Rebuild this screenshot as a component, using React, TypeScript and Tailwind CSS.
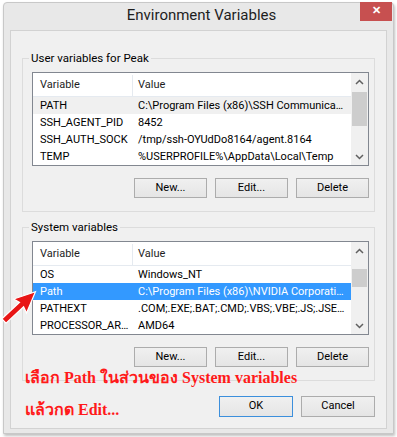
import React from "react";

type Row = [string, string];

const userRows: Row[] = [
  ["PATH", "C:\\Program Files (x86)\\SSH Communications Security\\SSH Secure Shell"],
  ["SSH_AGENT_PID", "8452"],
  ["SSH_AUTH_SOCK", "/tmp/ssh-OYUdDo8164/agent.8164"],
  ["TEMP", "%USERPROFILE%\\AppData\\Local\\Temp"],
];

const systemRows: Row[] = [
  ["OS", "Windows_NT"],
  ["Path", "C:\\Program Files (x86)\\NVIDIA Corporation\\PhysX\\Common"],
  ["PATHEXT", ".COM;.EXE;.BAT;.CMD;.VBS;.VBE;.JS;.JSE;.WSF;.WSH;.MSC"],
  ["PROCESSOR_ARCHITECTURE", "AMD64"],
];

function Chevron({ up }: { up?: boolean }) {
  return (
    <svg width="9" height="6" viewBox="0 0 9 6">
      <path
        d={up ? "M1 5 L4.5 1.5 L8 5" : "M1 1 L4.5 4.5 L8 1"}
        fill="none"
        stroke="#606060"
        strokeWidth="1.5"
      />
    </svg>
  );
}

function Scrollbar({ thumbTop, thumbH }: { thumbTop: number; thumbH: number }) {
  return (
    <div className="w-[17px] h-full bg-[#f0f0f0] flex flex-col shrink-0">
      <div className="h-[17px] flex items-center justify-center shrink-0">
        <Chevron up />
      </div>
      <div className="flex-1 px-[1px]">
        <div className="bg-[#cdcdcd]" style={{ marginTop: thumbTop, height: thumbH }} />
      </div>
      <div className="h-[17px] flex items-center justify-center shrink-0">
        <Chevron />
      </div>
    </div>
  );
}

function VarList({
  rows,
  selected,
  focused,
  thumbTop,
  thumbH,
}: {
  rows: Row[];
  selected: number;
  focused: boolean;
  thumbTop: number;
  thumbH: number;
}) {
  return (
    <div className="w-[337px] h-[94px] border border-[#828790] bg-white flex">
      <div className="flex-1 min-w-0 flex flex-col overflow-hidden">
        <div className="h-[24px] flex shrink-0 border-b border-[#e5eaf0] text-[#1e1e1e] pt-[2px]">
          <div className="w-[100px] pl-[7px] flex items-center border-r border-[#e5eaf0]">
            Variable
          </div>
          <div className="flex-1 pl-[5px] flex items-center">Value</div>
        </div>
        {rows.map(([name, value], i) => {
          const sel = i === selected;
          const rowCls = sel
            ? focused
              ? "bg-[#3399ff] text-white"
              : "bg-[#f0f0f0] text-black"
            : "text-black";
          return (
            <div key={name} className={"h-[17px] flex shrink-0 items-center pt-[2px] " + rowCls}>
              <div className="w-[100px] pl-[7px] pr-[3px] truncate">{name}</div>
              <div className="flex-1 min-w-0 pl-[5px] pr-[6px] truncate">{value}</div>
            </div>
          );
        })}
      </div>
      <Scrollbar thumbTop={thumbTop} thumbH={thumbH} />
    </div>
  );
}

function Btn({ children }: { children: React.ReactNode }) {
  return (
    <div className="h-[20px] w-[73px] flex items-center justify-center border border-[#acacac] bg-gradient-to-b from-[#f0f0f0] to-[#e5e5e5] text-black">
      {children}
    </div>
  );
}

function Group({
  label,
  rows,
  selected,
  focused,
  thumbTop,
  thumbH,
}: {
  label: string;
  rows: Row[];
  selected: number;
  focused: boolean;
  thumbTop: number;
  thumbH: number;
}) {
  return (
    <div className="relative border border-[#dcdcdc] pl-[9px] pt-[13px] pb-[13px]">
      <span className="absolute -top-[9px] left-[6px] px-[2px] bg-[#f0f0f0] leading-[16px] text-black text-[11.5px]">
        {label}
      </span>
      <VarList rows={rows} selected={selected} focused={focused} thumbTop={thumbTop} thumbH={thumbH} />
      <div className="mt-[12px] w-[337px] flex justify-end gap-[8px]">
        <Btn>New...</Btn>
        <Btn>Edit...</Btn>
        <Btn>Delete</Btn>
      </div>
    </div>
  );
}

export default function App() {
  return (
    <div
      className="relative w-[397px] h-[437px] bg-white pt-[2px] pl-[3px] text-[11px] overflow-hidden"
      style={{ fontFamily: "Roboto, 'Liberation Sans', sans-serif" }}
    >
      <div className="w-[391px] h-[432px] border border-[#c8c8c8] bg-[#e8e8e8] rounded-t-[4px] px-[6px] flex flex-col shadow-[1px_2px_3px_rgba(0,0,0,0.25)]">
        <div className="relative h-[27px] shrink-0 flex items-center justify-center">
          <span className="text-[15px] text-[#1e1e1e] pl-[6px] -mt-[2px]">Environment Variables</span>
          <div className="absolute -top-[1px] -right-[5px] w-[32px] h-[19px] bg-[#c75050] flex items-center justify-center text-white font-bold text-[11px]">
            ✕
          </div>
        </div>
        <div className="h-[399px] border border-[#d2d2d2] bg-[#f0f0f0] px-[11px] pt-[27px] flex flex-col">
          <Group label="User variables for Peak" rows={userRows} selected={0} focused={false} thumbTop={2} thumbH={34} />
          <div className="mt-[15px]">
            <Group label="System variables" rows={systemRows} selected={1} focused={true} thumbTop={10} thumbH={18} />
          </div>
          <div className="mt-[15px] flex justify-end gap-[8px]">
            <div className="h-[21px] w-[74px] flex items-center justify-center border border-[#3c8fdc] bg-gradient-to-b from-[#f0f0f0] to-[#e5e5e5]">
              OK
            </div>
            <div className="h-[21px] w-[74px] flex items-center justify-center border border-[#acacac] bg-gradient-to-b from-[#f0f0f0] to-[#e5e5e5]">
              Cancel
            </div>
          </div>
        </div>
      </div>

      {/* annotation overlay */}
      <svg className="absolute left-0 top-0 pointer-events-none" width="397" height="437">
        <polygon
          points="0,-3 24,-3 22,-9.5 43,0 22,9.5 24,3 0,3"
          transform="translate(4 321) rotate(-43)"
          fill="#e81515"
          stroke="#ffffff"
          strokeWidth="1.2"
        />
      </svg>
      <div
        className="absolute left-[25px] top-[368px] text-[#ff1a1a] font-bold text-[16px] leading-[20px]"
        style={{ fontFamily: "'Liberation Serif', 'DejaVu Serif', serif" }}
      >
        เลือก Path ในส่วนของ System variables
      </div>
      <div
        className="absolute left-[25px] top-[400px] text-[#ff1a1a] font-bold text-[16px] leading-[20px]"
        style={{ fontFamily: "'Liberation Serif', 'DejaVu Serif', serif" }}
      >
        แล้วกด Edit...
      </div>
    </div>
  );
}
